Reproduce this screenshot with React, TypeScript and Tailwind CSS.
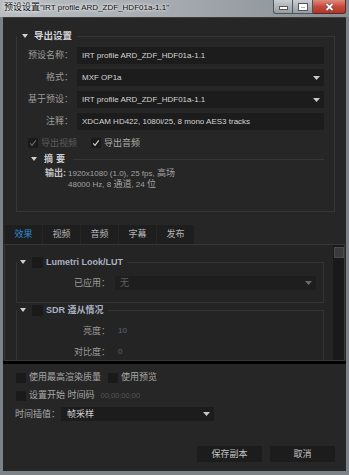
import type { ReactNode } from 'react';

const font = "font-['Liberation_Sans','Noto_Sans_CJK_SC',sans-serif]";

function Caret({ color = '#c8c8c8' }: { color?: string }) {
  return (
    <svg width="7" height="4" viewBox="0 0 7 4" className="shrink-0">
      <path d="M0 0h7L3.5 4z" fill={color} />
    </svg>
  );
}

function Twisty() {
  return (
    <svg width="6" height="4" viewBox="0 0 6 4" className="shrink-0">
      <path d="M0 0h6L3 4z" fill="#d0d0d0" />
    </svg>
  );
}

function Box({ checked = false, dim = false, size = 10 }: { checked?: boolean; dim?: boolean; size?: number }) {
  return (
    <div
      className="shrink-0 bg-[#1a1a1a] flex items-center justify-center"
      style={{ width: size, height: size }}
    >
      {checked && (
        <svg width="8" height="8" viewBox="0 0 8 8">
          <path
            d="M1.2 4.4L3 6.4 6.8 1.4"
            fill="none"
            stroke={dim ? '#6a6a6a' : '#d8d8d8'}
            strokeWidth="1.1"
          />
        </svg>
      )}
    </div>
  );
}

function FieldRow({ label, children, select = false }: { label: string; children: ReactNode; select?: boolean }) {
  return (
    <div className="flex items-center h-[17px]">
      <div className="w-[56px] text-right text-[9px] text-[#9c9c9c] leading-none">{label}</div>
      <div className="ml-[4px] w-[247px] h-full bg-[#1c1c1c] flex items-center pl-[5px] pr-[4px]">
        <span className="flex-1 text-[8px] text-[#d4d4d4] leading-none">{children}</span>
        {select && <Caret />}
      </div>
    </div>
  );
}

function EffectLegend({ title }: { title: string }) {
  return (
    <legend className="flex items-center h-[12px] pl-[3px] pr-[4px]">
      <Twisty />
      <div className="ml-[6px]">
        <Box size={11} />
      </div>
      <span className="ml-[3px] text-[9px] font-bold text-[#a9b2c2] leading-none">{title}</span>
    </legend>
  );
}

export default function App() {
  return (
    <div className={`w-[349px] h-[475px] flex flex-col bg-[#7b8288] ${font}`}>
      {/* Title bar */}
      <div className="h-[17px] shrink-0 flex items-start bg-gradient-to-r from-[#babec2] via-[#a4aaaf] to-[#868d93]">
        <span className="pl-[4px] pt-[3px] text-[9px] leading-none text-[#111] whitespace-nowrap [text-shadow:0_0_5px_#ffffff,0_0_3px_#ffffff]">
          预设设置<span className="text-[8px]">"IRT profile ARD_ZDF_HDF01a-1.1"</span>
        </span>
        <div className="ml-auto mr-[3px] flex h-[14px]">
          <div className="w-[20px] h-full rounded-bl-[3px] border border-t-0 border-[#4d545a] bg-gradient-to-b from-[#c9ced2] to-[#959ca2] flex items-end justify-center pb-[3px]">
            <div className="w-[7px] h-[2px] bg-white border border-[#555] box-content" />
          </div>
          <div className="w-[20px] h-full border border-t-0 border-l-0 border-[#4d545a] bg-gradient-to-b from-[#c9ced2] to-[#959ca2] flex items-center justify-center">
            <div className="w-[8px] h-[6px] border-2 border-t-[3px] border-white outline outline-1 outline-[#555]" />
          </div>
          <div className="w-[33px] h-full rounded-br-[3px] border border-t-0 border-l-0 border-[#5a2a24] bg-gradient-to-b from-[#dc8a7c] via-[#c8493b] to-[#b0362a] flex items-center justify-center">
            <svg width="9" height="8" viewBox="0 0 9 8">
              <path d="M1.5 1l6 6M7.5 1l-6 6" stroke="#444" strokeWidth="3" />
              <path d="M1.5 1l6 6M7.5 1l-6 6" stroke="#fff" strokeWidth="1.8" />
            </svg>
          </div>
        </div>
      </div>

      {/* Body */}
      <div className="flex-1 mx-[3px] mb-[4px] flex flex-col bg-[#262626] border-t border-[#3c3c3c]">
        {/* 导出设置 */}
        <fieldset className="mt-[12px] ml-[13px] mr-[11px] border border-[#363636] pr-[10px] pb-[21px]">
          <legend className="flex items-center h-[12px] pl-[5px] pr-[5px]">
            <Twisty />
            <span className="ml-[6px] text-[9.5px] font-bold text-[#d2d2d2] leading-none">导出设置</span>
          </legend>
          <div className="pt-[5px] flex flex-col gap-[5px]">
            <FieldRow label="预设名称：">IRT profile ARD_ZDF_HDF01a-1.1</FieldRow>
            <FieldRow label="格式：" select>
              MXF OP1a
            </FieldRow>
            <FieldRow label="基于预设：" select>
              IRT profile ARD_ZDF_HDF01a-1.1
            </FieldRow>
            <FieldRow label="注释：">XDCAM HD422, 1080i/25, 8 mono AES3 tracks</FieldRow>
          </div>
          <div className="mt-[7px] pl-[11px] flex items-center h-[12px] text-[9px] leading-none">
            <Box checked dim />
            <span className="ml-[3px] text-[#5c5c5c]">导出视频</span>
            <div className="ml-[14px]">
              <Box checked />
            </div>
            <span className="ml-[3px] text-[#ababab]">导出音频</span>
          </div>
          <div className="mt-[5px] pl-[14px] flex items-center h-[10px]">
            <Twisty />
            <span className="ml-[7px] text-[9px] font-bold text-[#cfcfcf] leading-none tracking-[3px]">摘要</span>
            <div className="ml-[5px] flex-1 h-px bg-[#363636]" />
          </div>
          <div className="mt-[4px] pl-[28px] flex text-[#a2a2a2] leading-[11px]">
            <span className="text-[9px] font-bold text-[#c4c4c4]">输出:</span>
            <div className="ml-[2px] flex flex-col">
              <span className="text-[8px]">
                1920x1080 (1.0), 25 fps, <span className="text-[9px]">高场</span>
              </span>
              <span className="text-[8px]">
                48000 Hz, 8 <span className="text-[9px]">通道</span>, 24 <span className="text-[9px]">位</span>
              </span>
            </div>
          </div>
        </fieldset>

        {/* Tabs */}
        <div className="mt-[13px] ml-[2px] flex gap-[1px] h-[19px] text-[9px] leading-none">
          {['效果', '视频', '音频', '字幕', '发布'].map((t, i) => (
            <div
              key={t}
              className={`w-[37px] flex items-center justify-center bg-[#1e1e1e] ${
                i === 0 ? 'text-[#2f8ad6]' : 'text-[#b4b4b4]'
              }`}
            >
              {t}
            </div>
          ))}
        </div>

        {/* Effects panel */}
        <div className="mx-[1px] h-[117px] shrink-0 flex border border-[#383838] bg-[#242424] overflow-hidden">
          <div className="flex-1 flex flex-col">
            <fieldset className="mt-[11px] ml-[11px] mr-[9px] border border-[#343434] pb-[12px]">
              <EffectLegend title="Lumetri Look/LUT" />
              <div className="pt-[8px] flex items-center h-[22px]">
                <div className="w-[93px] text-right text-[9px] text-[#9c9c9c] leading-none">已应用：</div>
                <div className="ml-[5px] w-[201px] h-[14px] bg-[#1e1e1e] flex items-center pl-[5px] pr-[4px]">
                  <span className="flex-1 text-[9px] text-[#5e5e5e] leading-none">无</span>
                  <Caret color="#6a6a6a" />
                </div>
              </div>
            </fieldset>
            <fieldset className="mt-[1px] ml-[11px] mr-[9px] border border-[#343434] pb-[12px]">
              <EffectLegend title="SDR 遵从情况" />
              <div className="pt-[8px] flex flex-col gap-[7px] text-[9px] leading-none">
                <div className="flex items-center h-[14px]">
                  <div className="w-[93px] text-right text-[#9c9c9c]">亮度：</div>
                  <span className="ml-[8px] text-[8px] text-[#5a6577]">10</span>
                </div>
                <div className="flex items-center h-[14px]">
                  <div className="w-[93px] text-right text-[#9c9c9c]">对比度：</div>
                  <span className="ml-[8px] text-[8px] text-[#5a6577]">0</span>
                </div>
              </div>
            </fieldset>
          </div>
          <div className="w-[11px] bg-[#191919] flex flex-col items-center pt-[2px]">
            <div className="w-[10px] h-[11px] bg-[#3a3a3a] border border-[#4a4a4a]" />
          </div>
        </div>
        <div className="h-[3px] bg-black shrink-0" />

        {/* Bottom options */}
        <div className="mt-[8px] ml-[13px] flex items-center h-[11px] text-[9px] leading-none text-[#a8a8a8]">
          <Box />
          <span className="ml-[3px]">使用最高渲染质量</span>
          <div className="ml-[7px]">
            <Box />
          </div>
          <span className="ml-[3px]">使用预览</span>
        </div>
        <div className="mt-[7px] ml-[13px] flex items-center h-[11px] text-[9px] leading-none text-[#a8a8a8]">
          <Box />
          <span className="ml-[3px]">设置开始 时间码</span>
          <span className="ml-[6px] text-[7.5px] text-[#555555]">00;00;00;00</span>
        </div>
        <div className="mt-[6px] ml-[12px] flex items-center h-[14px] text-[9px] leading-none">
          <span className="text-[#a8a8a8]">时间插值：</span>
          <div className="ml-[1px] w-[153px] h-full bg-[#1c1c1c] flex items-center pl-[6px] pr-[4px]">
            <span className="flex-1 text-[#d0d0d0]">帧采样</span>
            <Caret />
          </div>
        </div>

        <div className="mt-auto mb-[9px] mr-[11px] flex justify-end gap-[8px] text-[9px] leading-none text-[#c2c2c2]">
          <div className="w-[65px] h-[16px] bg-[#1c1c1c] flex items-center justify-center">保存副本</div>
          <div className="w-[65px] h-[16px] bg-[#1c1c1c] flex items-center justify-center">取消</div>
        </div>
      </div>
    </div>
  );
}
